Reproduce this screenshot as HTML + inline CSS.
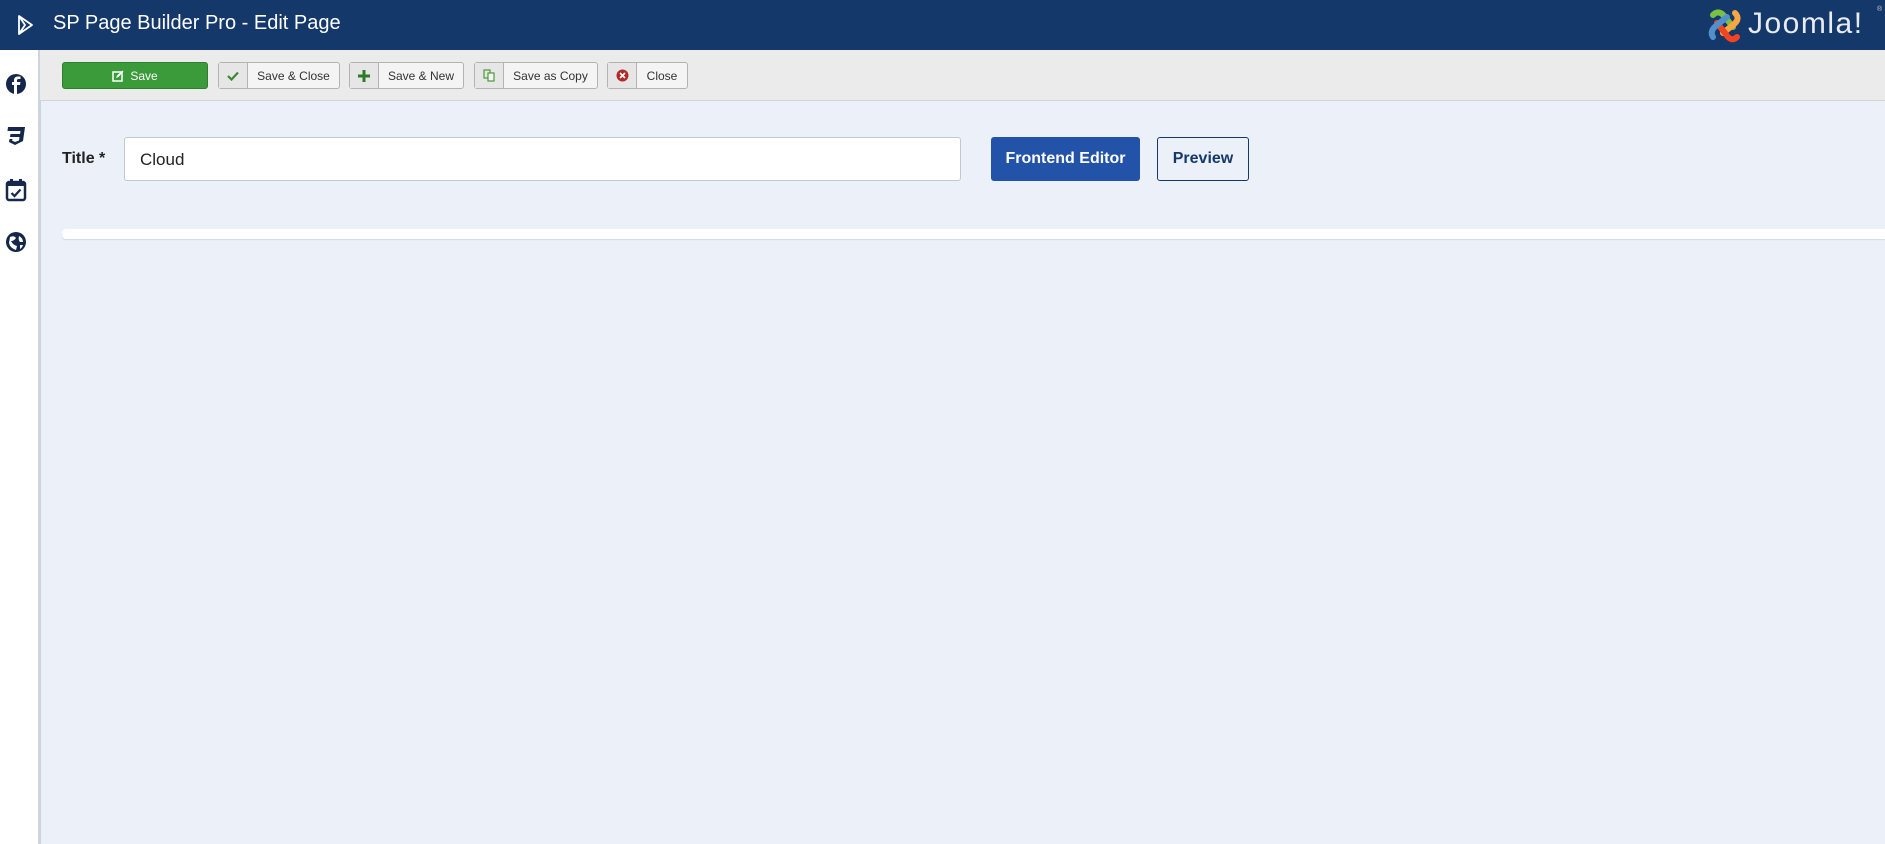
<!DOCTYPE html>
<html><head><meta charset="utf-8"><style>
*{box-sizing:border-box;margin:0;padding:0}
body{width:1885px;height:844px;overflow:hidden;background:#ecf0f8;font-family:"Liberation Sans",sans-serif;position:relative}
.hdr{position:absolute;left:0;top:0;width:1885px;height:50px;background:#15386b;color:#fff}
.hdr .t{position:absolute;left:53px;top:12px;font-size:20px}
.side{position:absolute;left:0;top:50px;width:41px;height:794px;background:#fff;border-right:3px solid #cfd3da}
.tb{position:absolute;left:40px;top:50px;right:0;height:51px;background:#ebebeb;border-bottom:1px solid #d3d3d3}
.b{position:absolute;top:62px;height:27px;background:#f4f4f4;border:1px solid #b3b3b3;border-radius:3px;font-size:12px;color:#333;display:flex;align-items:center}
.b .i{width:29px;height:100%;border-right:1px solid #b3b3b3;background:#e6e6e6;display:flex;align-items:center;justify-content:center}
.b .l{flex:1;text-align:center}
.save{background:#3b9a3a;border-color:#2d7f2c;color:#fff;justify-content:center}
.lbl{position:absolute;left:62px;top:150px;font-size:16px;color:#222;font-weight:bold}
.inp{position:absolute;left:124px;top:137px;width:837px;height:44px;background:#fff;border:1px solid #c3c7cf;border-radius:3px;font-size:17px;color:#222;padding:12px 15px}
.fe{position:absolute;left:991px;top:137px;width:149px;height:44px;background:#2353a8;border-radius:3px;color:#fff;font-size:16px;font-weight:bold;text-align:center;line-height:44px}
.pv{position:absolute;left:1157px;top:137px;width:92px;height:44px;border:1px solid #15386b;border-radius:3px;color:#15386b;font-size:16px;font-weight:bold;text-align:center;line-height:42px}
.bar{position:absolute;left:62px;top:229px;right:0;height:10px;background:#fff;border-radius:4px 0 0 4px;box-shadow:0 1px 1px #d5d7df}
</style></head><body>
<div class="hdr">
<svg style="position:absolute;left:17px;top:14px" width="18" height="22" viewBox="0 0 18 22"><path d="M2 2 L15 11 L2 20 Z M2 2 L8 11 L2 20" fill="none" stroke="#fff" stroke-width="1.8" stroke-linejoin="round"/></svg>
<div class="t">SP Page Builder Pro - Edit Page</div>
<svg style="position:absolute;left:1705px;top:5px" width="40" height="40" viewBox="0 0 40 40">
<path d="M8 10 Q14 4 20 12 L28 22" stroke="#7ac143" stroke-width="6" fill="none" stroke-linecap="round"/>
<path d="M30 8 Q36 14 28 20 L18 28" stroke="#f9a541" stroke-width="6" fill="none" stroke-linecap="round"/>
<path d="M32 32 Q26 38 20 28 L12 18" stroke="#f44321" stroke-width="6" fill="none" stroke-linecap="round"/>
<path d="M8 32 Q4 26 12 20 L22 12" stroke="#5091cd" stroke-width="6" fill="none" stroke-linecap="round"/>
</svg>
<div style="position:absolute;left:1748px;top:7px;font-size:30px;color:#e8ecf2;letter-spacing:1.5px;font-weight:300">Joomla!</div>
<div style="position:absolute;left:1877px;top:6px;font-size:7px;color:#ccc">®</div>
</div>
<div class="side">
<svg style="position:absolute;left:5px;top:23px" width="22" height="22" viewBox="0 0 22 22"><circle cx="11" cy="11" r="10" fill="#15284b"/><path d="M12 21 V12 H15 L15.5 9 H12 V7.5 Q12 6 13.5 6 H15.5 V3.5 H13 Q9 3.5 9 7.5 V9 H7 V12 H9 V21Z" fill="#fff"/></svg>
<svg style="position:absolute;left:5px;top:75px" width="22" height="22" viewBox="0 0 22 22"><path d="M3 2 H20 L18 16 L10 20 L4 17 L4.5 14 H7.5 L7 15.5 L10 17 L14 15.5 L14.5 12 H5 L5.5 9 H15 L15.5 6 H2.5Z" fill="#15284b"/></svg>
<svg style="position:absolute;left:5px;top:128px" width="22" height="24" viewBox="0 0 22 24"><rect x="2" y="4" width="18" height="18" rx="2" fill="none" stroke="#15284b" stroke-width="2.5"/><rect x="2" y="4" width="18" height="4" fill="#15284b"/><rect x="5" y="1" width="3" height="5" fill="#15284b"/><rect x="14" y="1" width="3" height="5" fill="#15284b"/><path d="M6.5 15 L9.5 18 L15.5 11.5" fill="none" stroke="#15284b" stroke-width="2.2"/></svg>
<svg style="position:absolute;left:5px;top:181px" width="22" height="22" viewBox="0 0 22 22"><circle cx="11" cy="11" r="10" fill="#15284b"/><path d="M5 6 Q9 4 11 7 Q9 10 6 10 Q8 14 12 15 L11 19 Q5 17 4 12Z M14 5 Q18 7 18 11 L15 11 Q13 9 14 5Z M15 14 L18 14 Q17 17 15 18Z" fill="#fff"/></svg>
</div>
<div class="tb"></div>
<div class="b save" style="left:62px;width:146px"><svg width="12" height="12" viewBox="0 0 12 12" style="margin-right:6px"><rect x="1" y="2" width="9" height="9" fill="none" stroke="#fff" stroke-width="1.5"/><path d="M4 8 L5 5.5 L10.5 0.5 L11.5 1.5 L6.5 7Z" fill="#fff"/></svg>Save</div>
<div class="b" style="left:218px;width:122px"><div class="i"><svg width="12" height="10"><path d="M1 5 L4.5 8.5 L11 1.5" fill="none" stroke="#3b8a2f" stroke-width="2.2"/></svg></div><div class="l">Save &amp; Close</div></div>
<div class="b" style="left:349px;width:115px"><div class="i"><svg width="12" height="12"><path d="M6 0 V12 M0 6 H12" stroke="#2f7a2a" stroke-width="3"/></svg></div><div class="l">Save &amp; New</div></div>
<div class="b" style="left:474px;width:124px"><div class="i"><svg width="12" height="13"><rect x="1" y="1" width="6" height="8" fill="none" stroke="#4a9a3a" stroke-width="1.2"/><rect x="5" y="4" width="6" height="8" fill="#f4f4f4" stroke="#4a9a3a" stroke-width="1.2"/></svg></div><div class="l">Save as Copy</div></div>
<div class="b" style="left:607px;width:81px"><div class="i"><svg width="13" height="13"><circle cx="6.5" cy="6.5" r="6" fill="#b12a2a"/><path d="M4 4 L9 9 M9 4 L4 9" stroke="#fff" stroke-width="1.6"/></svg></div><div class="l">Close</div></div>
<div class="lbl">Title *</div>
<div class="inp">Cloud</div>
<div class="fe">Frontend Editor</div>
<div class="pv">Preview</div>
<div class="bar"></div>
</body></html>
